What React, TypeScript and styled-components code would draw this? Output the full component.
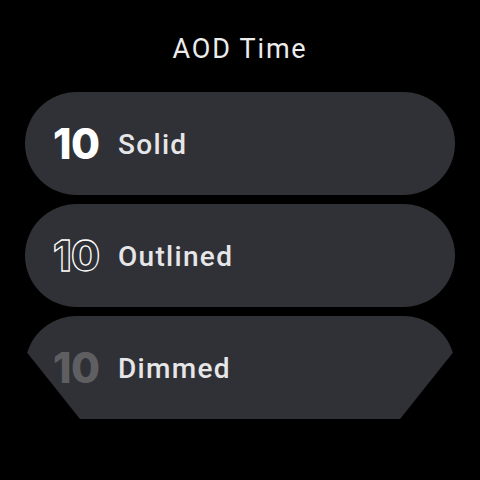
import React from 'react';
import styled, { createGlobalStyle } from 'styled-components';

const GlobalStyle = createGlobalStyle`
    html, body {
        margin: 0;
        padding: 0;
        background: #000;
    }
    body {
        width: 480px;
        height: 480px;
        overflow: hidden;
        font-family: Roboto, "Noto Sans", sans-serif;
    }
`;

const Screen = styled.div`
    display: flex;
    flex-direction: column;
    align-items: center;
    width: 480px;
    height: 480px;
    background: #000;
`;

const Title = styled.div`
    margin-top: 31px;
    height: 36px;
    line-height: 36px;
    font-size: 27px;
    color: #ececec;
    letter-spacing: 1.8px;
`;

const ChipList = styled.div`
    display: flex;
    flex-direction: column;
    gap: 9px;
    margin-top: 25px;
    width: 430px;
`;

const Chip = styled.div<{ $clipped?: boolean }>`
    display: flex;
    align-items: center;
    gap: 16px;
    height: 103px;
    padding-left: 28px;
    box-sizing: border-box;
    border-radius: 52px;
    background: #303136;
    clip-path: ${p =>
        p.$clipped
            ? 'polygon(0 34px, 0 0, 100% 0, 100% 34px, calc(100% - 55px) 100%, 55px 100%)'
            : 'none'};
`;

type Variant = 'solid' | 'outlined' | 'dimmed';

const Digits = styled.span<{ $variant: Variant }>`
    font-family: Inter, Roboto, sans-serif;
    font-weight: 800;
    font-size: 42px;
    letter-spacing: -0.5px;
    line-height: 1;
    width: 49px;
    color: ${p =>
        p.$variant === 'solid' ? '#ffffff' : p.$variant === 'dimmed' ? '#5f5f62' : 'transparent'};
    -webkit-text-stroke: ${p => (p.$variant === 'outlined' ? '1.3px #ffffff' : '0')};
`;

const Label = styled.span`
    font-size: 28px;
    font-weight: 500;
    color: #e6e6e8;
    letter-spacing: 1.3px;
    padding-top: 2px;
`;

interface Option {
    variant: Variant;
    label: string;
}

const options: Option[] = [
    { variant: 'solid', label: 'Solid' },
    { variant: 'outlined', label: 'Outlined' },
    { variant: 'dimmed', label: 'Dimmed' },
];

const App = () => {
    return (
        <>
            <GlobalStyle />
            <Screen>
                <Title>AOD Time</Title>
                <ChipList>
                    {options.map((item, i) => (
                        <Chip key={item.variant} $clipped={i === options.length - 1}>
                            <Digits $variant={item.variant}>10</Digits>
                            <Label>{item.label}</Label>
                        </Chip>
                    ))}
                </ChipList>
            </Screen>
        </>
    );
};

export default App;
